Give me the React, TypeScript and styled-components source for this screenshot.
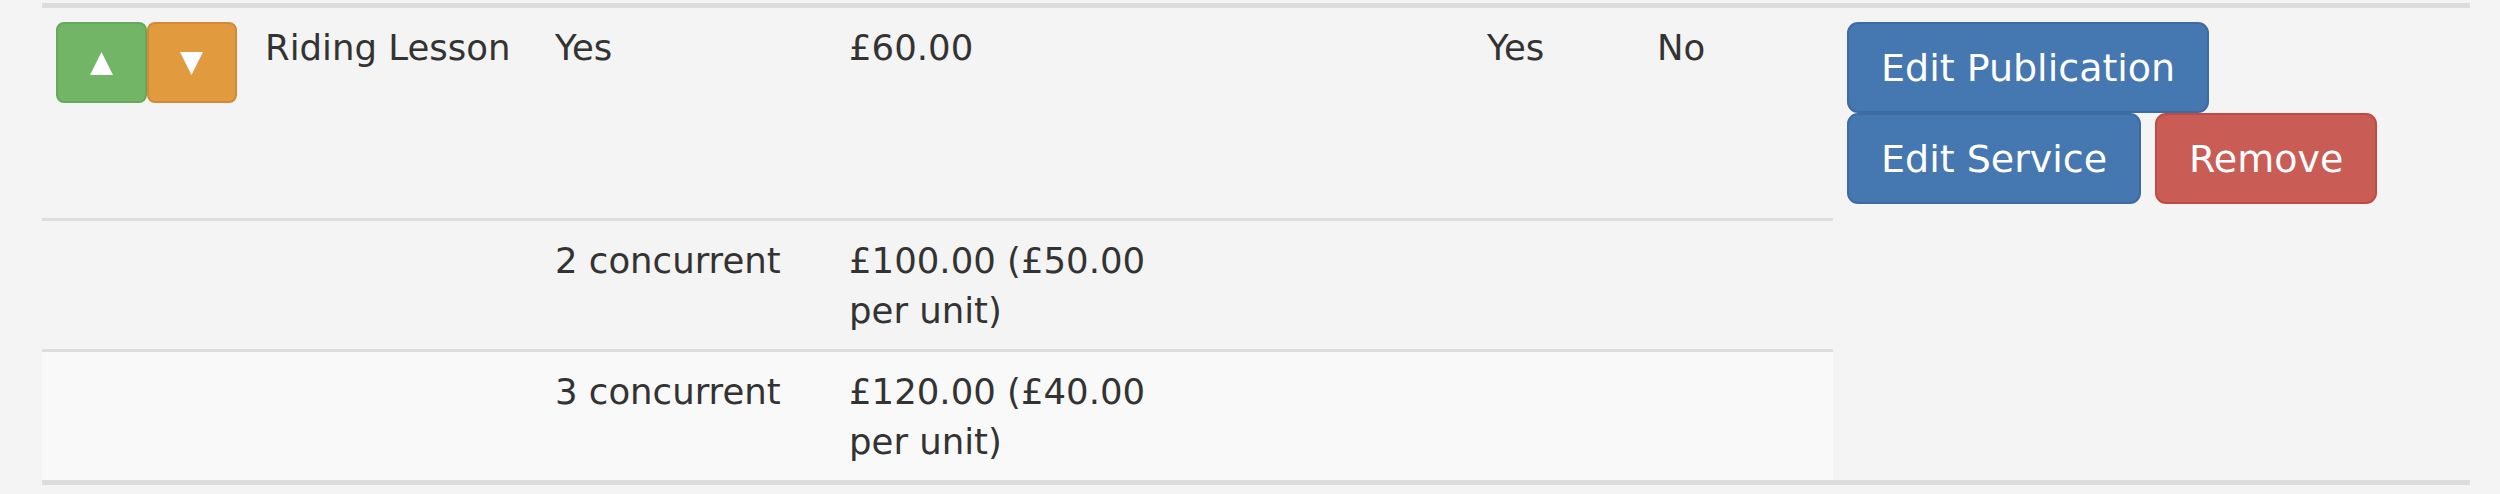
import React from "react";
import styled, { createGlobalStyle } from "styled-components";

const GlobalStyle = createGlobalStyle`
  html, body {
    margin: 0;
    padding: 0;
    background: #f4f4f4;
  }
  body {
    font-family: "DejaVu Sans", Verdana, sans-serif;
    color: #333333;
  }
`;

const Page = styled.div`
  padding: 3px 30px 0 42px;
`;

const Table = styled.table`
  width: 2428px;
  table-layout: fixed;
  border-collapse: separate;
  border-spacing: 0;
  border-top: 5px solid #dcdcdc;
  border-bottom: 5px solid #dcdcdc;
  font-size: 35.5px;
  line-height: 50px;
`;

const Cell = styled.td<{ $divider?: boolean; $striped?: boolean; $tight?: boolean }>`
  vertical-align: top;
  padding: ${(p) => (p.$tight ? "14px 14px 14px" : "15px 14px 13px")};
  border-top: ${(p) => (p.$divider ? "3px solid #dedede" : "0")};
  background: ${(p) => (p.$striped ? "#f9f9f9" : "transparent")};
  white-space: normal;
`;

const OrderGroup = styled.div`
  display: flex;
`;

const OrderButton = styled.button<{ $tone: "up" | "down" }>`
  width: 93px;
  height: 81px;
  margin: 0;
  padding: 2px 0 0;
  display: flex;
  align-items: center;
  justify-content: center;
  border-radius: 8px;
  border: 2px solid ${(p) => (p.$tone === "up" ? "#66a95a" : "#d28a36")};
  background: ${(p) => (p.$tone === "up" ? "#72b566" : "#e29a3f")};
  cursor: pointer;
`;

const ActionStack = styled.div`
  display: flex;
  flex-direction: column;
  align-items: flex-start;
`;

const ActionRow = styled.div`
  display: flex;
  gap: 14px;
`;

const ActionButton = styled.button<{ $variant: "primary" | "danger" }>`
  font-family: "DejaVu Sans", Verdana, sans-serif;
  font-size: 38px;
  line-height: 52px;
  padding: 18px 32px 17px;
  margin: 0;
  border-radius: 11px;
  border: 2px solid ${(p) => (p.$variant === "primary" ? "#3d6ba2" : "#c04b44")};
  background: ${(p) => (p.$variant === "primary" ? "#4577b0" : "#c95c54")};
  color: #ffffff;
  white-space: nowrap;
  cursor: pointer;
`;

const Triangle = ({ dir }: { dir: "up" | "down" }) => (
  <svg width="23" height="23" viewBox="0 0 23 23" aria-hidden="true">
    {dir === "up" ? (
      <polygon points="0,23 11.5,0 23,23" fill="#ffffff" />
    ) : (
      <polygon points="0,0 23,0 11.5,23" fill="#ffffff" />
    )}
  </svg>
);

type Tier = { label: string; price: string };

const tiers: Tier[] = [
  { label: "2 concurrent", price: "£100.00 (£50.00 per unit)" },
  { label: "3 concurrent", price: "£120.00 (£40.00 per unit)" },
];

const widths = [209, 290, 294, 348, 290, 170, 190, 637];

export default function App() {
  return (
    <>
      <GlobalStyle />
      <Page>
        <Table>
          <colgroup>
            {widths.map((w, i) => (
              <col key={i} style={{ width: w }} />
            ))}
          </colgroup>
          <tbody>
            <tr>
              <Cell $tight>
                <OrderGroup>
                  <OrderButton $tone="up" aria-label="Move up">
                    <Triangle dir="up" />
                  </OrderButton>
                  <OrderButton $tone="down" aria-label="Move down">
                    <Triangle dir="down" />
                  </OrderButton>
                </OrderGroup>
              </Cell>
              <Cell>Riding Lesson</Cell>
              <Cell>Yes</Cell>
              <Cell>£60.00</Cell>
              <Cell />
              <Cell>Yes</Cell>
              <Cell>No</Cell>
              <Cell $tight>
                <ActionStack>
                  <ActionButton $variant="primary">Edit Publication</ActionButton>
                  <ActionRow>
                    <ActionButton $variant="primary">Edit Service</ActionButton>
                    <ActionButton $variant="danger">Remove</ActionButton>
                  </ActionRow>
                </ActionStack>
              </Cell>
            </tr>
            {tiers.map((t, i) => (
              <tr key={t.label}>
                <Cell $divider $striped={i === 1} colSpan={2} />
                <Cell $divider $striped={i === 1}>
                  {t.label}
                </Cell>
                <Cell $divider $striped={i === 1}>
                  {t.price}
                </Cell>
                <Cell $divider $striped={i === 1} />
                <Cell $divider $striped={i === 1} />
                <Cell $divider $striped={i === 1} />
              </tr>
            ))}
          </tbody>
        </Table>
      </Page>
    </>
  );
}
